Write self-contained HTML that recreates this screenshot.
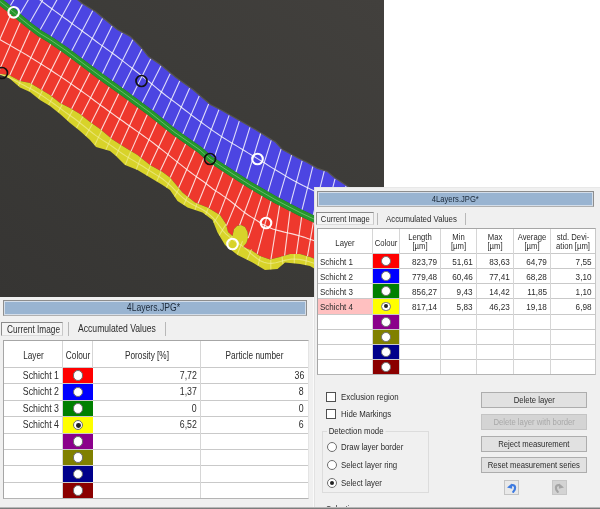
<!DOCTYPE html>
<html><head><meta charset="utf-8"><title>4Layers.JPG</title>
<style>
html,body{margin:0;padding:0;}
body{width:600px;height:509px;overflow:hidden;background:#fff;position:relative;font-family:"Liberation Sans",sans-serif;font-size:10px;color:#2b2b2b;}
.abs{position:absolute;}
.panel{position:absolute;background:#f0f0f0;overflow:hidden;filter:blur(0.4px);}
.title{display:flex;justify-content:center;position:absolute;box-sizing:border-box;border:1px solid #8e8e8e;border-bottom-color:#b0b0b0;background:#99b4d1;box-shadow:inset 0 0 0 1px #d3dde9;text-align:center;color:#1c2a3a;line-height:14px;}
.tab{display:flex;justify-content:center;position:absolute;box-sizing:border-box;border:1px solid #8c8c8c;border-right-color:#c8c8c8;border-bottom-color:#dcdcdc;background:#f4f4f4;text-align:center;white-space:nowrap;}
.tabtxt{position:absolute;white-space:nowrap;transform:scaleX(var(--sx));transform-origin:0 50%;}
.t{display:inline-block;transform:scaleX(var(--sx));transform-origin:50% 50%;white-space:nowrap;}
.vsep{position:absolute;width:1px;background:#b8b8b8;}
.tbl{position:absolute;background:#fff;box-sizing:border-box;border:1px solid #a6a6a6;border-right-color:#c8c8c8;border-bottom-color:#b4b4b4;}
.hl{position:absolute;height:1px;background:#c9c9c9;left:0;}
.vl{position:absolute;width:1px;background:#d6d6d6;top:0;}
.cell{position:absolute;white-space:nowrap;transform:scaleX(var(--sx));transform-origin:100% 50%;}
.cell.l{transform-origin:0 50%;}
.sw{position:absolute;}
.rad{position:absolute;box-sizing:border-box;border-radius:50%;background:#fff;border:1px solid #6e6e6e;}
.rad.on::after{content:"";position:absolute;left:1.8px;top:1.8px;right:1.8px;bottom:1.8px;border-radius:50%;background:#222;}
.hd{position:absolute;text-align:center;white-space:nowrap;line-height:11px;transform:scaleX(var(--sx));transform-origin:50% 50%;}
.btn{display:flex;justify-content:center;position:absolute;box-sizing:border-box;border:1px solid #adadad;background:#e1e1e1;text-align:center;white-space:nowrap;}
.chk{position:absolute;box-sizing:border-box;width:10px;height:10px;border:1px solid #505050;background:#fff;}
.lp .tbl{border-right-color:#e4e4e4}.lp{--sx:.845}.lp .tab{--sx:.813}.lp .cell{--sx:.86}.lp .hd{--sx:.81}
.rp{--sx:.825}.rp .tab{--sx:.807}.rp .cell{--sx:.86}.rp .cell.l{--sx:.845}.rp .hd{--sx:.81}.rp .btn{--sx:.812}.rp .title{--sx:.80}
</style></head><body>
<svg width="384" height="297" viewBox="0 0 384 297" style="position:absolute;left:0;top:0;display:block;filter:blur(0.45px)">
<defs><linearGradient id="bgd" x1="1" y1="0" x2="0" y2="1"><stop offset="0" stop-color="#42403d"/><stop offset="0.45" stop-color="#3c3b38"/><stop offset="1" stop-color="#363533"/></linearGradient></defs>
<rect width="384" height="297" fill="url(#bgd)"/>
<polyline points="-3.0,-62.0 77.0,0.0 82.0,4.0 95.0,12.0 107.0,22.0 117.0,30.0 130.0,37.0 140.0,47.0 148.0,57.0 160.0,65.0 175.0,77.5 192.5,90.0 210.0,105.0 220.0,110.0 237.5,120.0 255.0,130.0 275.0,142.5 282.0,150.0 296.7,158.0 307.0,163.0 316.7,168.7 327.0,172.0 334.0,178.0 344.7,185.0 352.0,190.0 365.0,198.0" fill="none" stroke="#6a6763" stroke-opacity="0.55" stroke-width="2.5"/>
<polygon points="-3.0,-62.0 77.0,0.0 82.0,4.0 95.0,12.0 107.0,22.0 117.0,30.0 130.0,37.0 140.0,47.0 148.0,57.0 160.0,65.0 175.0,77.5 192.5,90.0 210.0,105.0 220.0,110.0 237.5,120.0 255.0,130.0 275.0,142.5 282.0,150.0 296.7,158.0 307.0,163.0 316.7,168.7 327.0,172.0 334.0,178.0 344.7,185.0 352.0,190.0 365.0,198.0 361.2,234.9 336.3,224.9 316.3,216.5 301.5,209.5 276.6,196.6 251.7,182.2 229.3,167.7 212.0,156.4 202.0,147.4 177.0,129.9 152.0,109.9 126.9,91.3 102.0,73.3 82.0,58.4 68.6,48.3 51.8,36.7 41.8,30.8 32.0,23.4 24.1,17.0 15.8,9.7 2.1,-1.0 -5.7,-8.4" fill="#4c45e2"/>
<polygon points="-10.3,-3.6 -2.1,4.0 11.6,14.9 19.9,22.0 28.0,28.6 38.2,36.2 48.2,42.3 64.8,53.7 78.0,63.6 98.0,78.7 123.1,96.7 148.0,115.1 173.0,135.1 198.0,152.6 208.0,161.6 225.7,173.3 248.3,187.8 273.4,202.4 298.5,215.5 313.7,222.5 333.7,231.1 358.8,241.1 360.0,272.0 335.0,266.0 315.0,259.0 310.0,257.0 300.0,254.0 290.0,254.0 280.0,257.0 270.0,259.5 260.0,256.0 252.0,250.5 243.0,247.0 246.4,243.0 248.0,238.0 247.6,232.0 245.0,227.0 241.0,225.0 237.0,226.0 234.0,229.0 232.5,236.0 228.0,232.0 226.0,224.0 220.0,215.0 207.5,207.5 195.0,202.5 182.5,192.5 170.0,177.5 162.5,172.0 150.0,165.0 137.5,155.0 125.0,147.5 112.5,139.5 100.0,129.0 90.0,122.0 80.0,114.0 70.0,108.0 60.0,103.0 50.0,95.0 40.0,89.0 30.0,83.0 20.0,81.0 9.0,75.0 0.0,74.0 -8.0,72.0" fill="#ee382d"/>
<polygon points="-8.0,72.0 0.0,74.0 9.0,75.0 20.0,81.0 30.0,83.0 40.0,89.0 50.0,95.0 60.0,103.0 70.0,108.0 80.0,114.0 90.0,122.0 100.0,129.0 112.5,139.5 125.0,147.5 137.5,155.0 150.0,165.0 162.5,172.0 170.0,177.5 182.5,192.5 195.0,202.5 207.5,207.5 220.0,215.0 226.0,224.0 228.0,232.0 232.5,236.0 234.0,229.0 237.0,226.0 241.0,225.0 245.0,227.0 247.6,232.0 248.0,238.0 246.4,243.0 243.0,247.0 252.0,250.5 260.0,256.0 270.0,259.5 280.0,257.0 290.0,254.0 300.0,254.0 310.0,257.0 315.0,259.0 335.0,266.0 360.0,272.0 360.0,281.0 335.0,275.0 315.0,269.0 310.0,266.0 300.0,264.0 285.0,262.5 277.5,269.0 265.0,270.0 252.5,262.5 237.5,255.0 225.0,245.0 217.5,232.5 212.5,220.0 202.5,212.5 187.5,207.5 177.5,201.0 170.0,190.0 162.5,185.0 150.0,177.5 137.5,170.0 125.0,165.0 116.0,156.0 110.0,151.0 96.0,147.0 90.0,140.0 80.0,131.0 70.0,123.0 60.0,114.0 50.0,106.0 40.0,100.0 30.0,92.0 20.0,87.5 9.0,78.0 0.0,74.5 -8.0,72.5" fill="#d8d32a"/>
<polygon points="-5.7,-8.4 2.1,-1.0 15.8,9.7 24.1,17.0 32.0,23.4 41.8,30.8 51.8,36.7 68.6,48.3 82.0,58.4 102.0,73.3 126.9,91.3 152.0,109.9 177.0,129.9 202.0,147.4 212.0,156.4 229.3,167.7 251.7,182.2 276.6,196.6 301.5,209.5 316.3,216.5 336.3,224.9 361.2,234.9 358.8,241.1 333.7,231.1 313.7,222.5 298.5,215.5 273.4,202.4 248.3,187.8 225.7,173.3 208.0,161.6 198.0,152.6 173.0,135.1 148.0,115.1 123.1,96.7 98.0,78.7 78.0,63.6 64.8,53.7 48.2,42.3 38.2,36.2 28.0,28.6 19.9,22.0 11.6,14.9 -2.1,4.0 -10.3,-3.6" fill="#25962b"/>
<polyline points="-2.9,-32.3 0.4,-30.0 3.7,-27.7 6.9,-25.3 10.1,-23.0 13.4,-20.6 16.5,-18.1 19.7,-15.7 22.8,-13.2 25.9,-10.7 29.1,-8.3 32.3,-5.8 35.5,-3.4 38.7,-1.0 41.9,1.4 45.1,3.8 48.3,6.2 51.5,8.5 54.7,10.9 58.0,13.2 61.2,15.6 64.4,18.0 67.7,20.3 70.9,22.7 74.1,25.1 77.3,27.4 80.6,29.8 83.8,32.2 87.0,34.5 90.2,36.9 93.4,39.3 96.6,41.7 99.8,44.1 103.1,46.4 106.3,48.8 109.6,51.1 112.8,53.5 116.0,55.8 119.2,58.2 122.4,60.6 125.6,63.1 128.7,65.6 131.9,68.0 135.0,70.5 138.2,73.0 141.3,75.5 144.4,78.0 147.5,80.5 150.6,83.0 153.7,85.6 156.7,88.2 159.8,90.7 163.0,93.2 166.1,95.7 169.3,98.1 172.5,100.5 175.7,102.9 178.9,105.3 182.0,107.8 185.2,110.2 188.4,112.6 191.5,115.1 194.7,117.5 197.9,119.9 201.2,122.3 204.4,124.6 207.6,126.9 210.9,129.3 214.2,131.6 217.5,133.8 220.8,136.1 224.1,138.3 227.5,140.4 230.9,142.5 234.3,144.6 237.8,146.6 241.2,148.7 244.6,150.8 248.0,152.9 251.5,154.9 254.9,157.0 258.3,159.1 261.7,161.2 265.1,163.3 268.4,165.5 271.8,167.6 275.3,169.7 278.7,171.8 282.1,173.8 285.5,175.9 289.0,177.9 292.5,179.9 295.9,181.8 299.5,183.7 303.0,185.6 306.6,187.3 310.2,189.1 313.8,190.8 317.4,192.6 321.0,194.4 324.5,196.2 328.1,198.0 331.7,199.8 335.2,201.6 338.8,203.5 342.3,205.3 345.9,207.2 349.4,209.1 352.9,211.0" fill="none" stroke="#fff" stroke-opacity="0.82" stroke-width="1.10"/>
<line x1="13.2" y1="-49.2" x2="-9.1" y2="-8.5" stroke="#fff" stroke-opacity="0.82" stroke-width="1.10"/>
<line x1="23.6" y1="-41.2" x2="1.0" y2="-2.3" stroke="#fff" stroke-opacity="0.82" stroke-width="1.10"/>
<line x1="33.8" y1="-33.3" x2="10.4" y2="5.5" stroke="#fff" stroke-opacity="0.82" stroke-width="1.10"/>
<line x1="43.4" y1="-25.7" x2="20.3" y2="13.5" stroke="#fff" stroke-opacity="0.82" stroke-width="1.10"/>
<line x1="53.2" y1="-18.3" x2="30.2" y2="21.8" stroke="#fff" stroke-opacity="0.82" stroke-width="1.10"/>
<line x1="62.9" y1="-10.8" x2="40.3" y2="29.5" stroke="#fff" stroke-opacity="0.82" stroke-width="1.10"/>
<line x1="72.7" y1="-3.3" x2="51.1" y2="36.2" stroke="#fff" stroke-opacity="0.82" stroke-width="1.10"/>
<line x1="82.3" y1="4.4" x2="61.6" y2="43.2" stroke="#fff" stroke-opacity="0.82" stroke-width="1.10"/>
<line x1="92.7" y1="10.8" x2="71.8" y2="50.7" stroke="#fff" stroke-opacity="0.82" stroke-width="1.10"/>
<line x1="102.5" y1="18.4" x2="82.0" y2="58.2" stroke="#fff" stroke-opacity="0.82" stroke-width="1.10"/>
<line x1="112.0" y1="26.1" x2="92.3" y2="66.0" stroke="#fff" stroke-opacity="0.82" stroke-width="1.10"/>
<line x1="122.2" y1="32.9" x2="102.5" y2="73.6" stroke="#fff" stroke-opacity="0.82" stroke-width="1.10"/>
<line x1="132.8" y1="39.8" x2="112.4" y2="80.8" stroke="#fff" stroke-opacity="0.82" stroke-width="1.10"/>
<line x1="141.8" y1="49.3" x2="122.4" y2="88.0" stroke="#fff" stroke-opacity="0.82" stroke-width="1.10"/>
<line x1="150.7" y1="58.9" x2="132.5" y2="95.3" stroke="#fff" stroke-opacity="0.82" stroke-width="1.10"/>
<line x1="160.9" y1="65.9" x2="142.4" y2="102.5" stroke="#fff" stroke-opacity="0.82" stroke-width="1.10"/>
<line x1="170.1" y1="73.7" x2="152.7" y2="110.2" stroke="#fff" stroke-opacity="0.82" stroke-width="1.10"/>
<line x1="179.7" y1="80.9" x2="162.9" y2="118.3" stroke="#fff" stroke-opacity="0.82" stroke-width="1.10"/>
<line x1="189.6" y1="88.2" x2="172.8" y2="126.4" stroke="#fff" stroke-opacity="0.82" stroke-width="1.10"/>
<line x1="199.2" y1="96.0" x2="182.9" y2="133.9" stroke="#fff" stroke-opacity="0.82" stroke-width="1.10"/>
<line x1="208.6" y1="104.0" x2="193.5" y2="141.3" stroke="#fff" stroke-opacity="0.82" stroke-width="1.10"/>
<line x1="218.9" y1="109.7" x2="203.9" y2="148.9" stroke="#fff" stroke-opacity="0.82" stroke-width="1.10"/>
<line x1="229.1" y1="115.4" x2="214.2" y2="157.6" stroke="#fff" stroke-opacity="0.82" stroke-width="1.10"/>
<line x1="239.3" y1="121.2" x2="225.2" y2="164.9" stroke="#fff" stroke-opacity="0.82" stroke-width="1.10"/>
<line x1="249.9" y1="127.3" x2="236.0" y2="172.0" stroke="#fff" stroke-opacity="0.82" stroke-width="1.10"/>
<line x1="260.6" y1="133.5" x2="246.7" y2="178.7" stroke="#fff" stroke-opacity="0.82" stroke-width="1.10"/>
<line x1="271.2" y1="140.4" x2="257.2" y2="185.2" stroke="#fff" stroke-opacity="0.82" stroke-width="1.10"/>
<line x1="281.0" y1="149.1" x2="268.1" y2="191.4" stroke="#fff" stroke-opacity="0.82" stroke-width="1.10"/>
<line x1="291.6" y1="155.2" x2="279.1" y2="197.7" stroke="#fff" stroke-opacity="0.82" stroke-width="1.10"/>
<line x1="302.1" y1="160.8" x2="290.5" y2="203.8" stroke="#fff" stroke-opacity="0.82" stroke-width="1.10"/>
<line x1="312.8" y1="166.6" x2="302.1" y2="209.6" stroke="#fff" stroke-opacity="0.82" stroke-width="1.10"/>
<line x1="324.2" y1="171.2" x2="313.3" y2="214.9" stroke="#fff" stroke-opacity="0.82" stroke-width="1.10"/>
<line x1="335.0" y1="178.8" x2="324.6" y2="219.8" stroke="#fff" stroke-opacity="0.82" stroke-width="1.10"/>
<line x1="345.9" y1="186.0" x2="335.7" y2="224.7" stroke="#fff" stroke-opacity="0.82" stroke-width="1.10"/>
<polyline points="-2.9,38.0 0.6,40.0 4.1,42.0 7.6,43.9 11.0,45.9 14.5,47.9 18.0,49.9 21.4,51.9 24.9,53.9 28.3,56.0 31.7,58.1 35.1,60.2 38.5,62.4 41.9,64.5 45.2,66.6 48.6,68.8 52.0,71.0 55.3,73.2 58.6,75.4 62.0,77.6 65.3,79.8 68.6,82.1 71.9,84.4 75.1,86.7 78.4,89.0 81.7,91.3 85.0,93.6 88.2,95.9 91.4,98.3 94.6,100.7 97.8,103.1 101.0,105.5 104.3,107.8 107.5,110.2 110.7,112.5 114.0,114.9 117.2,117.2 120.5,119.5 123.7,121.8 127.0,124.2 130.3,126.5 133.5,128.8 136.8,131.1 140.1,133.4 143.3,135.7 146.6,138.1 149.8,140.4 153.0,142.8 156.2,145.2 159.4,147.7 162.5,150.1 165.6,152.6 168.8,155.1 171.9,157.6 175.0,160.1 178.1,162.6 181.3,165.1 184.4,167.6 187.6,170.1 190.7,172.5 193.9,174.9 197.2,177.3 200.4,179.5 203.7,181.8 206.9,184.2 210.1,186.7 213.2,189.2 216.5,191.4 219.9,193.5 223.1,195.9 226.5,198.1 229.7,200.5 232.8,203.0 235.9,205.5 239.0,208.0 242.1,210.6 245.3,213.0 248.5,215.3 251.9,217.4 255.3,219.5 258.7,221.8 262.0,224.0 265.5,225.8 269.1,227.6 272.8,229.0 276.7,230.1 280.6,231.1 284.4,232.1 288.3,233.0 292.2,233.9 296.1,234.9 300.0,236.0 303.8,237.1 307.6,238.4 311.4,239.7 315.1,241.1 318.9,242.5 322.6,243.9 326.4,245.3 330.1,246.7 333.9,248.0 337.6,249.4 341.4,250.7 345.2,251.9 349.0,253.2 352.8,254.4" fill="none" stroke="#fff" stroke-opacity="0.82" stroke-width="1.10"/>
<line x1="10.8" y1="14.3" x2="-14.5" y2="72.0" stroke="#fff" stroke-opacity="0.82" stroke-width="1.10"/>
<line x1="20.2" y1="22.5" x2="-2.1" y2="73.3" stroke="#fff" stroke-opacity="0.82" stroke-width="1.10"/>
<line x1="30.0" y1="30.4" x2="9.8" y2="75.3" stroke="#fff" stroke-opacity="0.82" stroke-width="1.10"/>
<line x1="40.3" y1="37.7" x2="19.8" y2="80.9" stroke="#fff" stroke-opacity="0.82" stroke-width="1.10"/>
<line x1="50.7" y1="44.2" x2="31.4" y2="83.7" stroke="#fff" stroke-opacity="0.82" stroke-width="1.10"/>
<line x1="60.8" y1="51.0" x2="41.5" y2="89.7" stroke="#fff" stroke-opacity="0.82" stroke-width="1.10"/>
<line x1="70.6" y1="58.3" x2="51.6" y2="96.0" stroke="#fff" stroke-opacity="0.82" stroke-width="1.10"/>
<line x1="80.3" y1="65.5" x2="61.1" y2="103.4" stroke="#fff" stroke-opacity="0.82" stroke-width="1.10"/>
<line x1="89.9" y1="72.8" x2="71.7" y2="108.8" stroke="#fff" stroke-opacity="0.82" stroke-width="1.10"/>
<line x1="99.7" y1="79.9" x2="81.6" y2="115.3" stroke="#fff" stroke-opacity="0.82" stroke-width="1.10"/>
<line x1="109.2" y1="87.0" x2="91.2" y2="122.7" stroke="#fff" stroke-opacity="0.82" stroke-width="1.10"/>
<line x1="118.7" y1="93.7" x2="101.2" y2="130.0" stroke="#fff" stroke-opacity="0.82" stroke-width="1.10"/>
<line x1="128.2" y1="100.6" x2="110.8" y2="138.0" stroke="#fff" stroke-opacity="0.82" stroke-width="1.10"/>
<line x1="137.7" y1="107.7" x2="120.9" y2="144.8" stroke="#fff" stroke-opacity="0.82" stroke-width="1.10"/>
<line x1="147.2" y1="114.8" x2="131.1" y2="151.1" stroke="#fff" stroke-opacity="0.82" stroke-width="1.10"/>
<line x1="156.9" y1="122.2" x2="141.0" y2="157.6" stroke="#fff" stroke-opacity="0.82" stroke-width="1.10"/>
<line x1="166.6" y1="130.1" x2="150.2" y2="164.9" stroke="#fff" stroke-opacity="0.82" stroke-width="1.10"/>
<line x1="176.1" y1="137.3" x2="160.4" y2="170.6" stroke="#fff" stroke-opacity="0.82" stroke-width="1.10"/>
<line x1="185.6" y1="144.1" x2="170.2" y2="177.5" stroke="#fff" stroke-opacity="0.82" stroke-width="1.10"/>
<line x1="195.0" y1="150.7" x2="178.7" y2="187.7" stroke="#fff" stroke-opacity="0.82" stroke-width="1.10"/>
<line x1="203.9" y1="158.1" x2="188.2" y2="196.8" stroke="#fff" stroke-opacity="0.82" stroke-width="1.10"/>
<line x1="213.6" y1="165.3" x2="198.0" y2="203.5" stroke="#fff" stroke-opacity="0.82" stroke-width="1.10"/>
<line x1="223.1" y1="171.7" x2="209.0" y2="208.1" stroke="#fff" stroke-opacity="0.82" stroke-width="1.10"/>
<line x1="233.0" y1="178.2" x2="219.2" y2="214.4" stroke="#fff" stroke-opacity="0.82" stroke-width="1.10"/>
<line x1="243.5" y1="184.8" x2="226.5" y2="225.6" stroke="#fff" stroke-opacity="0.82" stroke-width="1.10"/>
<line x1="252.7" y1="190.4" x2="239.6" y2="225.3" stroke="#fff" stroke-opacity="0.82" stroke-width="1.10"/>
<line x1="262.0" y1="195.9" x2="248.2" y2="238.2" stroke="#fff" stroke-opacity="0.82" stroke-width="1.10"/>
<line x1="271.0" y1="201.1" x2="257.2" y2="253.8" stroke="#fff" stroke-opacity="0.82" stroke-width="1.10"/>
<line x1="279.6" y1="205.7" x2="271.0" y2="259.2" stroke="#fff" stroke-opacity="0.82" stroke-width="1.10"/>
<line x1="290.0" y1="211.2" x2="284.6" y2="255.6" stroke="#fff" stroke-opacity="0.82" stroke-width="1.10"/>
<line x1="301.6" y1="217.1" x2="296.4" y2="253.8" stroke="#fff" stroke-opacity="0.82" stroke-width="1.10"/>
<line x1="313.3" y1="222.6" x2="307.5" y2="256.1" stroke="#fff" stroke-opacity="0.82" stroke-width="1.10"/>
<line x1="324.7" y1="227.3" x2="318.6" y2="260.0" stroke="#fff" stroke-opacity="0.82" stroke-width="1.10"/>
<line x1="335.7" y1="231.9" x2="330.0" y2="264.2" stroke="#fff" stroke-opacity="0.82" stroke-width="1.10"/>
<line x1="346.8" y1="236.3" x2="341.6" y2="267.4" stroke="#fff" stroke-opacity="0.82" stroke-width="1.10"/>
<polyline points="-5.4,72.9 -1.5,73.9 2.3,75.0 6.1,76.4 9.7,78.0 13.3,79.8 16.9,81.6 20.4,83.5 24.0,85.3 27.5,87.2 31.1,89.0 34.6,91.0 38.0,93.0 41.4,95.1 44.7,97.4 48.0,99.6 51.3,101.9 54.5,104.2 57.8,106.6 61.0,109.0 64.2,111.4 67.5,113.7 70.7,116.0 74.0,118.3 77.2,120.7 80.3,123.2 83.5,125.7 86.6,128.2 89.7,130.7 92.8,133.2 96.0,135.6 99.3,137.9 102.6,140.1 106.0,142.2 109.4,144.4 112.7,146.7 115.9,149.0 119.1,151.4 122.4,153.7 125.7,155.9 129.1,158.0 132.5,160.1 136.0,162.1 139.4,164.2 142.8,166.3 146.2,168.5 149.5,170.6 152.9,172.8 156.3,174.9 159.7,177.0 163.0,179.3 166.1,181.8 169.1,184.5 172.0,187.2 174.8,190.0 177.7,192.8 180.5,195.6 183.5,198.3 186.6,200.8 190.0,203.0 193.5,204.9 197.0,206.8 200.6,208.6 204.1,210.5 207.4,212.8 210.4,215.4 213.3,218.2 215.9,221.2 218.3,224.4 220.7,227.6 223.1,230.8 225.8,233.8 228.8,236.4 231.9,238.9 235.0,241.4 238.4,243.5 241.8,245.6 245.0,248.0 248.0,250.7 250.8,253.5 253.9,256.0 257.0,258.5 260.3,260.8 263.9,262.3 267.8,263.3 271.8,263.4 275.8,262.7 279.6,261.7 283.5,260.6 287.4,259.7 291.3,259.1 295.3,259.0 299.3,259.4 303.2,260.1 307.1,261.1 310.9,262.3 314.7,263.6 318.5,265.0 322.2,266.3 326.0,267.6 329.9,268.8 333.7,269.9 337.5,271.0 341.4,272.0 345.3,273.0 349.2,273.9 353.1,274.8 357.0,275.8" fill="none" stroke="#f4f0a0" stroke-opacity="0.60" stroke-width="1.10"/>
<line x1="-2.5" y1="73.6" x2="-2.5" y2="73.6" stroke="#f4f0a0" stroke-opacity="0.60" stroke-width="1.10"/>
<line x1="9.5" y1="75.5" x2="8.7" y2="77.8" stroke="#f4f0a0" stroke-opacity="0.60" stroke-width="1.10"/>
<line x1="20.3" y1="81.2" x2="18.3" y2="86.0" stroke="#f4f0a0" stroke-opacity="0.60" stroke-width="1.10"/>
<line x1="31.9" y1="84.4" x2="29.0" y2="91.3" stroke="#f4f0a0" stroke-opacity="0.60" stroke-width="1.10"/>
<line x1="42.5" y1="90.6" x2="38.6" y2="98.6" stroke="#f4f0a0" stroke-opacity="0.60" stroke-width="1.10"/>
<line x1="52.6" y1="97.4" x2="48.6" y2="104.9" stroke="#f4f0a0" stroke-opacity="0.60" stroke-width="1.10"/>
<line x1="62.3" y1="104.4" x2="58.0" y2="112.3" stroke="#f4f0a0" stroke-opacity="0.60" stroke-width="1.10"/>
<line x1="72.8" y1="109.9" x2="67.3" y2="120.3" stroke="#f4f0a0" stroke-opacity="0.60" stroke-width="1.10"/>
<line x1="83.0" y1="116.4" x2="76.5" y2="128.0" stroke="#f4f0a0" stroke-opacity="0.60" stroke-width="1.10"/>
<line x1="92.4" y1="123.8" x2="85.6" y2="136.0" stroke="#f4f0a0" stroke-opacity="0.60" stroke-width="1.10"/>
<line x1="101.7" y1="130.5" x2="94.7" y2="145.2" stroke="#f4f0a0" stroke-opacity="0.60" stroke-width="1.10"/>
<line x1="111.0" y1="138.4" x2="105.9" y2="149.8" stroke="#f4f0a0" stroke-opacity="0.60" stroke-width="1.10"/>
<line x1="120.9" y1="145.1" x2="116.0" y2="155.8" stroke="#f4f0a0" stroke-opacity="0.60" stroke-width="1.10"/>
<line x1="130.8" y1="151.2" x2="125.3" y2="164.9" stroke="#f4f0a0" stroke-opacity="0.60" stroke-width="1.10"/>
<line x1="140.8" y1="157.8" x2="136.3" y2="169.5" stroke="#f4f0a0" stroke-opacity="0.60" stroke-width="1.10"/>
<line x1="150.5" y1="165.4" x2="146.6" y2="175.5" stroke="#f4f0a0" stroke-opacity="0.60" stroke-width="1.10"/>
<line x1="161.0" y1="171.2" x2="156.8" y2="181.4" stroke="#f4f0a0" stroke-opacity="0.60" stroke-width="1.10"/>
<line x1="171.0" y1="178.7" x2="166.4" y2="187.6" stroke="#f4f0a0" stroke-opacity="0.60" stroke-width="1.10"/>
<line x1="179.0" y1="188.4" x2="174.5" y2="196.5" stroke="#f4f0a0" stroke-opacity="0.60" stroke-width="1.10"/>
<line x1="187.4" y1="196.5" x2="183.8" y2="205.0" stroke="#f4f0a0" stroke-opacity="0.60" stroke-width="1.10"/>
<line x1="197.0" y1="203.5" x2="195.0" y2="209.9" stroke="#f4f0a0" stroke-opacity="0.60" stroke-width="1.10"/>
<line x1="208.3" y1="208.0" x2="205.6" y2="214.8" stroke="#f4f0a0" stroke-opacity="0.60" stroke-width="1.10"/>
<line x1="218.9" y1="214.5" x2="213.8" y2="222.8" stroke="#f4f0a0" stroke-opacity="0.60" stroke-width="1.10"/>
<line x1="226.0" y1="224.3" x2="219.2" y2="235.4" stroke="#f4f0a0" stroke-opacity="0.60" stroke-width="1.10"/>
<line x1="232.2" y1="235.9" x2="227.5" y2="247.0" stroke="#f4f0a0" stroke-opacity="0.60" stroke-width="1.10"/>
<line x1="242.5" y1="241.1" x2="237.3" y2="254.6" stroke="#f4f0a0" stroke-opacity="0.60" stroke-width="1.10"/>
<line x1="251.6" y1="249.3" x2="247.1" y2="259.7" stroke="#f4f0a0" stroke-opacity="0.60" stroke-width="1.10"/>
<line x1="260.4" y1="256.4" x2="258.0" y2="265.6" stroke="#f4f0a0" stroke-opacity="0.60" stroke-width="1.10"/>
<line x1="270.8" y1="259.4" x2="270.8" y2="269.4" stroke="#f4f0a0" stroke-opacity="0.60" stroke-width="1.10"/>
<line x1="282.0" y1="256.4" x2="282.9" y2="264.1" stroke="#f4f0a0" stroke-opacity="0.60" stroke-width="1.10"/>
<line x1="294.3" y1="254.2" x2="294.3" y2="263.2" stroke="#f4f0a0" stroke-opacity="0.60" stroke-width="1.10"/>
<line x1="306.7" y1="256.2" x2="305.6" y2="265.1" stroke="#f4f0a0" stroke-opacity="0.60" stroke-width="1.10"/>
<line x1="318.3" y1="260.2" x2="316.7" y2="269.3" stroke="#f4f0a0" stroke-opacity="0.60" stroke-width="1.10"/>
<line x1="329.6" y1="264.3" x2="328.2" y2="272.9" stroke="#f4f0a0" stroke-opacity="0.60" stroke-width="1.10"/>
<line x1="341.0" y1="267.5" x2="339.9" y2="276.0" stroke="#f4f0a0" stroke-opacity="0.60" stroke-width="1.10"/>
<line x1="352.6" y1="270.4" x2="351.6" y2="278.8" stroke="#f4f0a0" stroke-opacity="0.60" stroke-width="1.10"/>
<polyline points="-8.0,-6.0 0.0,1.5 13.7,12.3 22.0,19.5 30.0,26.0 40.0,33.5 50.0,39.5 66.7,51.0 80.0,61.0 100.0,76.0 125.0,94.0 150.0,112.5 175.0,132.5 200.0,150.0 210.0,159.0 227.5,170.5 250.0,185.0 275.0,199.5 300.0,212.5 315.0,219.5 335.0,228.0 360.0,238.0" fill="none" stroke="#cfe8c8" stroke-opacity="0.5" stroke-width="0.8"/>
<circle cx="13.7" cy="12.3" r="5.3" fill="none" stroke="#fff" stroke-width="2.1"/>
<circle cx="257.5" cy="159.0" r="5.3" fill="none" stroke="#fff" stroke-width="2.1"/>
<circle cx="266.0" cy="223.0" r="5.3" fill="none" stroke="#fff" stroke-width="2.1"/>
<circle cx="232.5" cy="244.0" r="5.3" fill="none" stroke="#fff" stroke-width="2.1"/>
<circle cx="2.0" cy="73.0" r="5.5" fill="none" stroke="#111" stroke-width="1.7"/>
<circle cx="141.5" cy="81.0" r="5.5" fill="none" stroke="#111" stroke-width="1.7"/>
<circle cx="210.0" cy="159.0" r="5.5" fill="none" stroke="#111" stroke-width="1.7"/>
</svg>
<div class="panel lp" style="left:0;top:297px;width:314px;height:212px;border-right:1px solid #fafafa;box-sizing:border-box;font-size:10.2px">
<div class="title" style="left:3px;top:3px;width:304px;height:16px;padding-right:4px"><span class="t">4Layers.JPG*</span></div>
<div class="tab" style="left:1px;top:25px;width:62px;height:14px;line-height:14px;padding-left:3px"><span class="t">Current Image</span></div>
<div class="vsep" style="left:68px;top:25px;height:14px"></div>
<div class="tabtxt" style="left:78px;top:25px;line-height:13px">Accumulated Values</div>
<div class="vsep" style="left:165px;top:25px;height:14px"></div>
<div class="tbl" style="left:3px;top:43px;width:306px;height:159px">
<div class="hl" style="top:26px;width:304px"></div>
<div class="hl" style="top:42px;width:304px"></div>
<div class="hl" style="top:59px;width:304px"></div>
<div class="hl" style="top:75px;width:304px"></div>
<div class="hl" style="top:92px;width:304px"></div>
<div class="hl" style="top:108px;width:304px"></div>
<div class="hl" style="top:124px;width:304px"></div>
<div class="hl" style="top:141px;width:304px"></div>
<div class="vl" style="left:58px;height:157px"></div>
<div class="vl" style="left:88px;height:157px"></div>
<div class="vl" style="left:196px;height:157px"></div>
<div class="hd" style="left:-20px;width:99px;top:8.5px">Layer</div>
<div class="hd" style="left:39px;width:70px;top:8.5px">Colour</div>
<div class="hd" style="left:69px;width:148px;top:8.5px">Porosity [%]</div>
<div class="hd" style="left:177px;width:147px;top:8.5px">Particle number</div>
<div class="sw" style="left:59px;top:27px;width:30px;height:15px;background:#ff0000"></div>
<div class="rad" style="left:68.8px;top:29.2px;width:10.5px;height:10.5px"></div>
<div class="cell" style="right:249px;top:28.5px;line-height:12px">Schicht 1</div>
<div class="cell" style="right:111px;top:28.5px;line-height:12px">7,72</div>
<div class="cell" style="right:4px;top:28.5px;line-height:12px">36</div>
<div class="sw" style="left:59px;top:43px;width:30px;height:16px;background:#0000ff"></div>
<div class="rad" style="left:68.8px;top:45.8px;width:10.5px;height:10.5px"></div>
<div class="cell" style="right:249px;top:45.0px;line-height:12px">Schicht 2</div>
<div class="cell" style="right:111px;top:45.0px;line-height:12px">1,37</div>
<div class="cell" style="right:4px;top:45.0px;line-height:12px">8</div>
<div class="sw" style="left:59px;top:60px;width:30px;height:15px;background:#008000"></div>
<div class="rad" style="left:68.8px;top:62.2px;width:10.5px;height:10.5px"></div>
<div class="cell" style="right:249px;top:61.5px;line-height:12px">Schicht 3</div>
<div class="cell" style="right:111px;top:61.5px;line-height:12px">0</div>
<div class="cell" style="right:4px;top:61.5px;line-height:12px">0</div>
<div class="sw" style="left:59px;top:76px;width:30px;height:16px;background:#ffff00"></div>
<div class="rad on" style="left:68.8px;top:78.8px;width:10.5px;height:10.5px"></div>
<div class="cell" style="right:249px;top:78.0px;line-height:12px">Schicht 4</div>
<div class="cell" style="right:111px;top:78.0px;line-height:12px">6,52</div>
<div class="cell" style="right:4px;top:78.0px;line-height:12px">6</div>
<div class="sw" style="left:59px;top:93px;width:30px;height:15px;background:#8b008b"></div>
<div class="rad" style="left:68.8px;top:95.2px;width:10.5px;height:10.5px"></div>
<div class="sw" style="left:59px;top:109px;width:30px;height:15px;background:#808000"></div>
<div class="rad" style="left:68.8px;top:111.2px;width:10.5px;height:10.5px"></div>
<div class="sw" style="left:59px;top:125px;width:30px;height:16px;background:#00008b"></div>
<div class="rad" style="left:68.8px;top:127.8px;width:10.5px;height:10.5px"></div>
<div class="sw" style="left:59px;top:142px;width:30px;height:15px;background:#8b0000"></div>
<div class="rad" style="left:68.8px;top:144.2px;width:10.5px;height:10.5px"></div>
</div>
</div>
<div class="panel rp" style="left:314px;top:187px;width:286px;height:322px;border-left:1px solid #e2e2e2;border-top:1px solid #e8e8e8;box-sizing:border-box;font-size:9.5px">
<div class="title" style="left:2px;top:3px;width:277px;height:16px"><span class="t">4Layers.JPG*</span></div>
<div class="tab" style="left:1px;top:24px;width:58px;height:13px;line-height:12px"><span class="t">Current Image</span></div>
<div class="vsep" style="left:62px;top:25px;height:12px"></div>
<div class="tabtxt" style="left:71px;top:25px;line-height:12px">Accumulated Values</div>
<div class="vsep" style="left:150px;top:25px;height:12px"></div>
<div class="tbl" style="left:2px;top:40px;width:279px;height:147px">
<div class="hl" style="top:24px;width:277px"></div>
<div class="hl" style="top:39px;width:277px"></div>
<div class="hl" style="top:54px;width:277px"></div>
<div class="hl" style="top:69px;width:277px"></div>
<div class="hl" style="top:85px;width:277px"></div>
<div class="hl" style="top:100px;width:277px"></div>
<div class="hl" style="top:115px;width:277px"></div>
<div class="hl" style="top:130px;width:277px"></div>
<div class="vl" style="left:54px;height:145px"></div>
<div class="vl" style="left:81px;height:145px"></div>
<div class="vl" style="left:122px;height:145px"></div>
<div class="vl" style="left:158px;height:145px"></div>
<div class="vl" style="left:195px;height:145px"></div>
<div class="vl" style="left:232px;height:145px"></div>
<div class="hd" style="left:-20px;width:94px;top:8.0px">Layer</div>
<div class="hd" style="left:35px;width:66px;top:8.0px">Colour</div>
<div class="hd" style="left:62px;width:80px;top:2.5px;line-height:9.5px">Length<br>[µm]</div>
<div class="hd" style="left:103px;width:75px;top:2.5px;line-height:9.5px">Min<br>[µm]</div>
<div class="hd" style="left:139px;width:76px;top:2.5px;line-height:9.5px">Max<br>[µm]</div>
<div class="hd" style="left:176px;width:76px;top:2.5px;line-height:9.5px">Average<br>[µm]</div>
<div class="hd" style="left:213px;width:84px;top:2.5px;line-height:9.5px">std. Devi-<br>ation [µm]</div>
<div class="sw" style="left:55px;top:25px;width:26px;height:14px;background:#ff0000"></div>
<div class="rad" style="left:63.2px;top:27.2px;width:9.6px;height:9.6px"></div>
<div class="cell l" style="left:2px;top:26.5px;line-height:12px">Schicht 1</div>
<div class="cell" style="right:157.5px;top:26.5px;line-height:12px">823,79</div>
<div class="cell" style="right:122.5px;top:26.5px;line-height:12px">51,61</div>
<div class="cell" style="right:85.0px;top:26.5px;line-height:12px">83,63</div>
<div class="cell" style="right:48.0px;top:26.5px;line-height:12px">64,79</div>
<div class="cell" style="right:3.5px;top:26.5px;line-height:12px">7,55</div>
<div class="sw" style="left:55px;top:40px;width:26px;height:14px;background:#0000ff"></div>
<div class="rad" style="left:63.2px;top:42.2px;width:9.6px;height:9.6px"></div>
<div class="cell l" style="left:2px;top:41.5px;line-height:12px">Schicht 2</div>
<div class="cell" style="right:157.5px;top:41.5px;line-height:12px">779,48</div>
<div class="cell" style="right:122.5px;top:41.5px;line-height:12px">60,46</div>
<div class="cell" style="right:85.0px;top:41.5px;line-height:12px">77,41</div>
<div class="cell" style="right:48.0px;top:41.5px;line-height:12px">68,28</div>
<div class="cell" style="right:3.5px;top:41.5px;line-height:12px">3,10</div>
<div class="sw" style="left:55px;top:55px;width:26px;height:14px;background:#008000"></div>
<div class="rad" style="left:63.2px;top:57.2px;width:9.6px;height:9.6px"></div>
<div class="cell l" style="left:2px;top:56.5px;line-height:12px">Schicht 3</div>
<div class="cell" style="right:157.5px;top:56.5px;line-height:12px">856,27</div>
<div class="cell" style="right:122.5px;top:56.5px;line-height:12px">9,43</div>
<div class="cell" style="right:85.0px;top:56.5px;line-height:12px">14,42</div>
<div class="cell" style="right:48.0px;top:56.5px;line-height:12px">11,85</div>
<div class="cell" style="right:3.5px;top:56.5px;line-height:12px">1,10</div>
<div class="sw" style="left:0px;top:70px;width:54px;height:15px;background:#ffc0c0"></div>
<div class="sw" style="left:55px;top:70px;width:26px;height:15px;background:#ffff00"></div>
<div class="rad on" style="left:63.2px;top:72.7px;width:9.6px;height:9.6px"></div>
<div class="cell l" style="left:2px;top:72.0px;line-height:12px">Schicht 4</div>
<div class="cell" style="right:157.5px;top:72.0px;line-height:12px">817,14</div>
<div class="cell" style="right:122.5px;top:72.0px;line-height:12px">5,83</div>
<div class="cell" style="right:85.0px;top:72.0px;line-height:12px">46,23</div>
<div class="cell" style="right:48.0px;top:72.0px;line-height:12px">19,18</div>
<div class="cell" style="right:3.5px;top:72.0px;line-height:12px">6,98</div>
<div class="sw" style="left:55px;top:86px;width:26px;height:14px;background:#8b008b"></div>
<div class="rad" style="left:63.2px;top:88.2px;width:9.6px;height:9.6px"></div>
<div class="sw" style="left:55px;top:101px;width:26px;height:14px;background:#808000"></div>
<div class="rad" style="left:63.2px;top:103.2px;width:9.6px;height:9.6px"></div>
<div class="sw" style="left:55px;top:116px;width:26px;height:14px;background:#00008b"></div>
<div class="rad" style="left:63.2px;top:118.2px;width:9.6px;height:9.6px"></div>
<div class="sw" style="left:55px;top:131px;width:26px;height:14px;background:#8b0000"></div>
<div class="rad" style="left:63.2px;top:133.2px;width:9.6px;height:9.6px"></div>
</div>
<div class="chk" style="left:11px;top:204px"></div>
<div class="tabtxt" style="left:26px;top:203px;line-height:12px">Exclusion region</div>
<div class="chk" style="left:11px;top:221px"></div>
<div class="tabtxt" style="left:26px;top:220px;line-height:12px">Hide Markings</div>
<div class="abs" style="left:7px;top:243px;width:107px;height:62px;border:1px solid #dcdcdc;box-sizing:border-box"></div>
<div class="tabtxt" style="left:12px;top:237px;line-height:12px;background:#f0f0f0;padding:0 2px">Detection mode</div>
<div class="rad" style="left:12.0px;top:254.0px;width:10.0px;height:10.0px"></div>
<div class="tabtxt" style="left:26px;top:253px;line-height:12px">Draw layer border</div>
<div class="rad" style="left:12.0px;top:272.0px;width:10.0px;height:10.0px"></div>
<div class="tabtxt" style="left:26px;top:271px;line-height:12px">Select layer ring</div>
<div class="rad on" style="left:12.0px;top:290.0px;width:10.0px;height:10.0px"></div>
<div class="tabtxt" style="left:26px;top:289px;line-height:12px">Select layer</div>
<div class="btn" style="left:166px;top:204px;width:106px;height:16px;line-height:14px;"><span class="t">Delete layer</span></div>
<div class="btn" style="left:166px;top:226px;width:106px;height:16px;line-height:14px;color:#a8a8a8;background:#d4d4d4;border-color:#c4c4c4;"><span class="t">Delete layer with border</span></div>
<div class="btn" style="left:166px;top:248px;width:106px;height:16px;line-height:14px;"><span class="t">Reject measurement</span></div>
<div class="btn" style="left:166px;top:269px;width:106px;height:16px;line-height:14px;"><span class="t">Reset measurement series</span></div>
<div class="abs" style="left:189px;top:292px;width:15px;height:15px;box-sizing:border-box;background:#e9e9e9;border:1px solid #c4c4c4"><svg width="13" height="13" viewBox="0 0 13 13" style="display:block"><path d="M8.2 10.8 C 11 8.6, 10.8 3.6, 7 4.2" fill="none" stroke="#3f7be0" stroke-width="2.2" stroke-linecap="round"/><path d="M2 6.6 L6.8 2.6 L7.2 7.8 Z" fill="#3f7be0"/></svg></div>
<div class="abs" style="left:237px;top:292px;width:15px;height:15px;box-sizing:border-box;background:#d3d3d3;border:1px solid #c6c6c6"><svg width="13" height="13" viewBox="0 0 13 13" style="display:block"><path d="M4.8 10.8 C 2 8.6, 2.2 3.6, 6 4.2" fill="none" stroke="#a4a4a4" stroke-width="2.2" stroke-linecap="round"/><path d="M11 6.6 L6.2 2.6 L5.8 7.8 Z" fill="#a4a4a4"/></svg></div>
<div class="tabtxt" style="left:11px;top:315px;line-height:12px">Selection</div>
</div>
<div class="abs" style="left:0;top:507px;width:600px;height:2px;background:linear-gradient(#dcdcdc 0%,#8c8c8c 55%,#6a6a6a 100%)"></div>
</body></html>
